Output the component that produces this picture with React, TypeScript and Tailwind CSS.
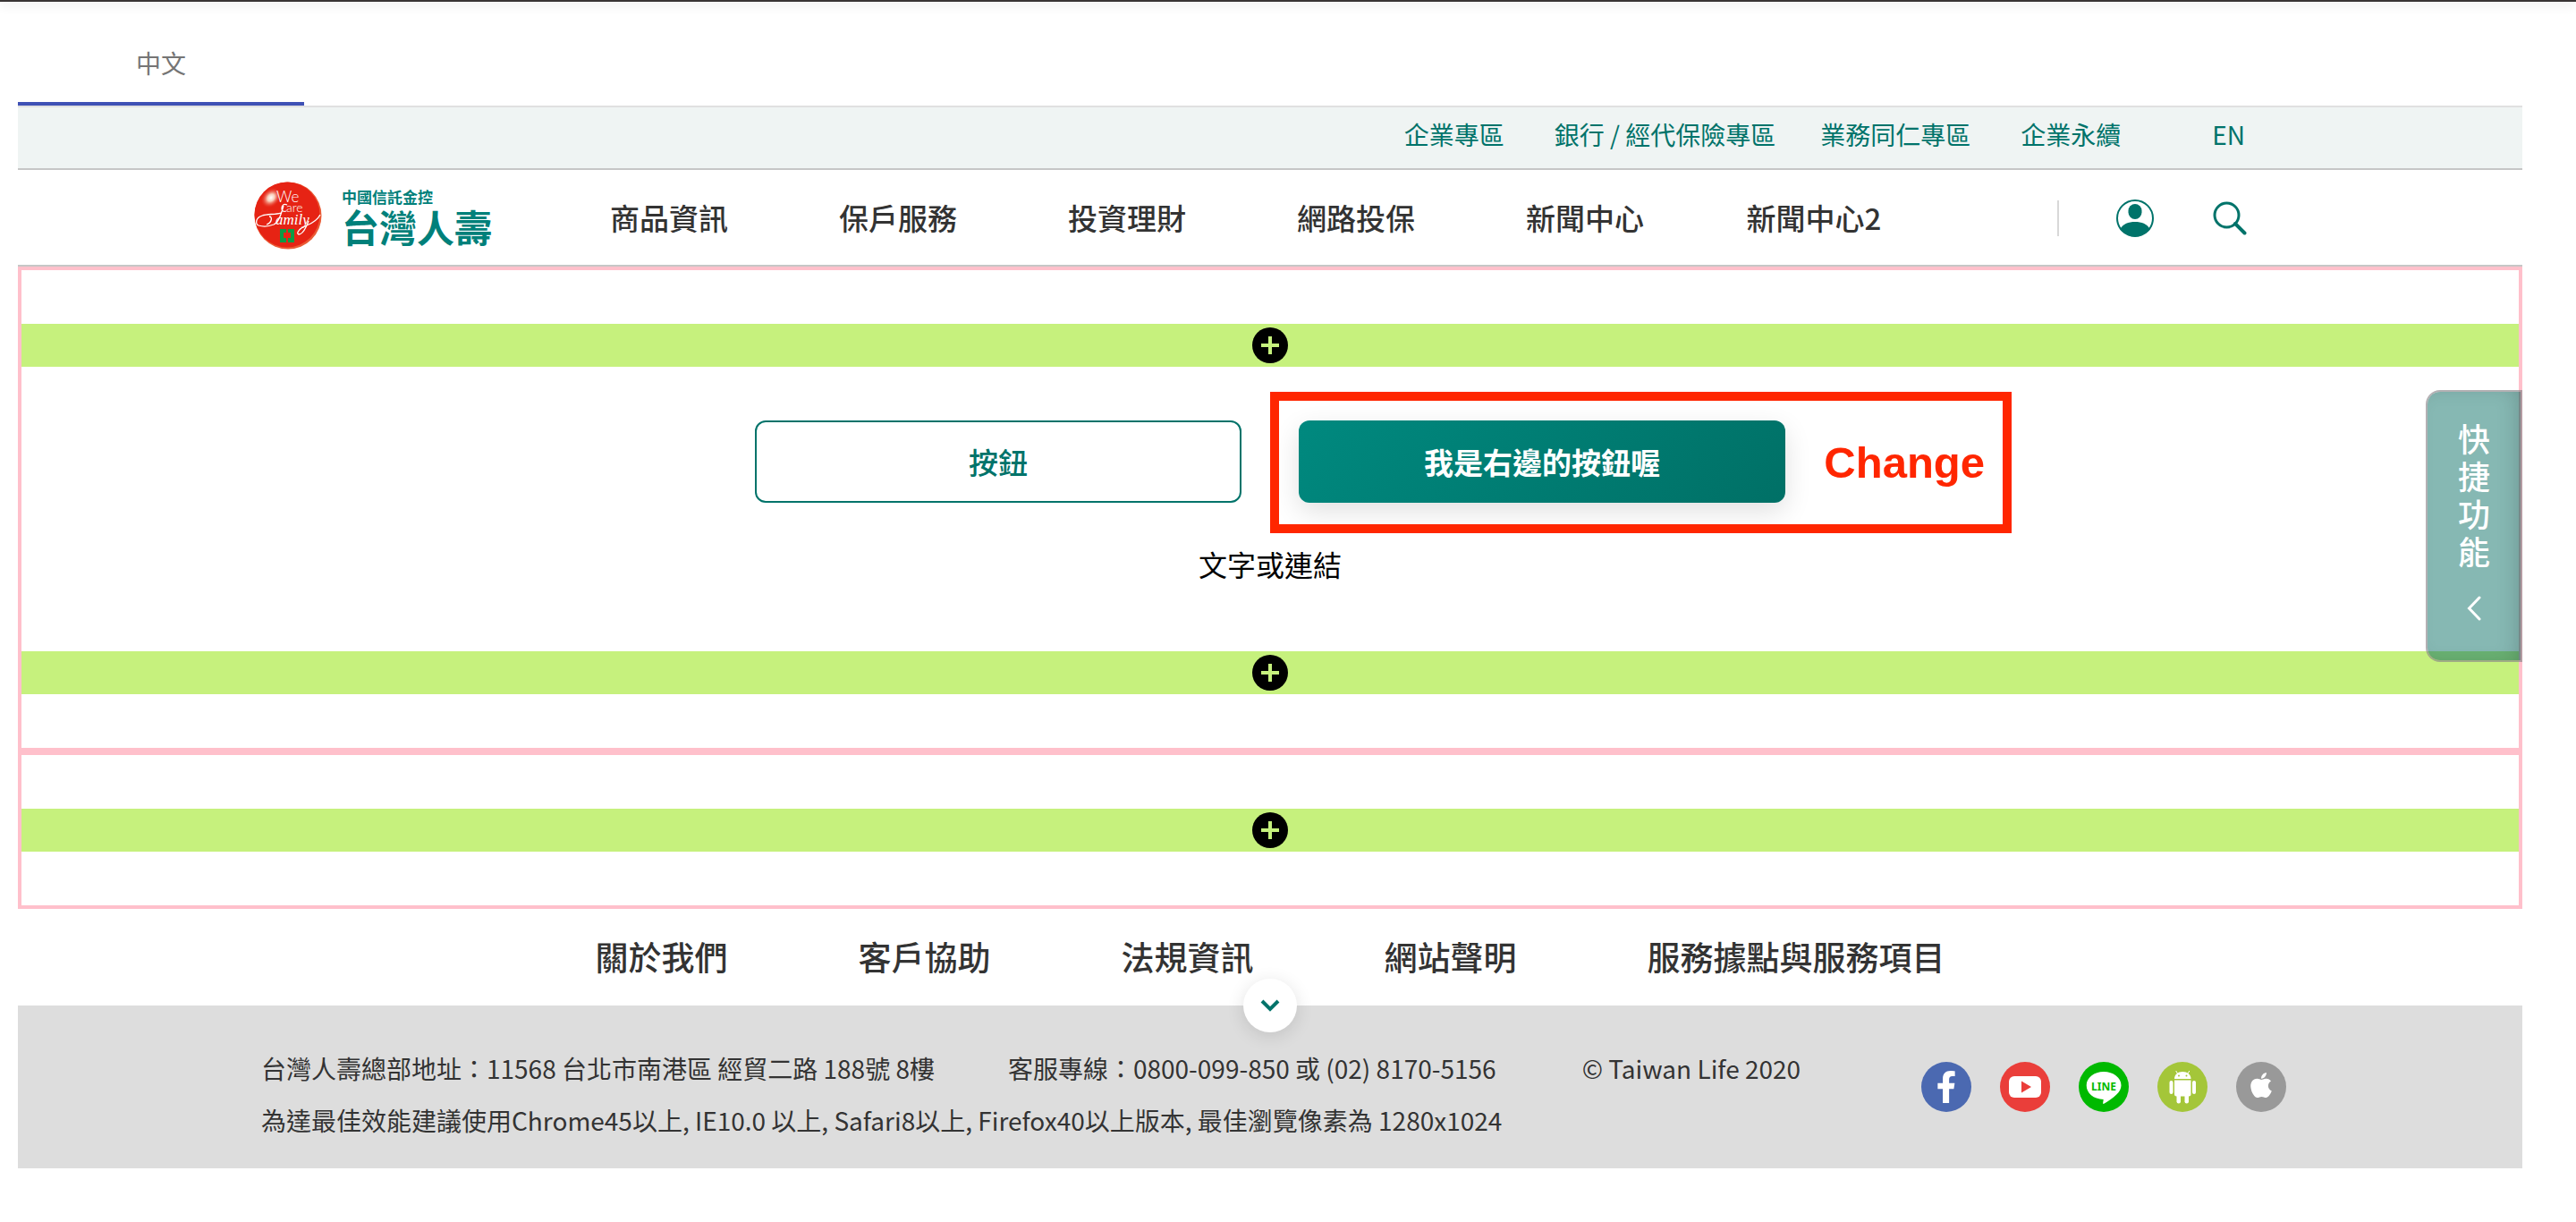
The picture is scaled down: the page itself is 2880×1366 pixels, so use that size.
import React from "react";
import { FaApple, FaFacebookF } from "react-icons/fa";

const topLinks = [
  { label: "企業專區", gap: "" },
  { label: "銀行 / 經代保險專區", gap: "ml-14" },
  { label: "業務同仁專區", gap: "ml-[50px]" },
  { label: "企業永續", gap: "ml-14" },
  { label: "EN", gap: "ml-[102px]" },
];

const navItems = ["商品資訊", "保戶服務", "投資理財", "網路投保", "新聞中心", "新聞中心2"];

const footerLinks = ["關於我們", "客戶協助", "法規資訊", "網站聲明", "服務據點與服務項目"];

function Emblem() {
  return (
    <svg viewBox="0 0 76 76" className="size-[76px] shrink-0" aria-hidden="true">
      <defs>
        <radialGradient id="shine" cx="0.5" cy="0.5" r="0.5">
          <stop offset="0" stopColor="#ffffff" />
          <stop offset="0.35" stopColor="#f9cdb8" />
          <stop offset="1" stopColor="#e62314" stopOpacity="0" />
        </radialGradient>
      </defs>
      <circle cx="38" cy="38" r="37.5" fill="#ea5a35" />
      <circle cx="37" cy="37" r="36.5" fill="#e62314" />
      <ellipse cx="19" cy="18" rx="13" ry="10" fill="url(#shine)" transform="rotate(-45 19 18)" />
      <text x="25" y="23" fontFamily="Lato, sans-serif" fontWeight="300" fontSize="17" fill="#fff">We</text>
      <text x="36" y="34" fontFamily="Lato, sans-serif" fontWeight="300" fontSize="14" fill="#fff">are</text>
      <path d="M37 26c-4-2-6 1-6 4s2 4 5 3M33 27c-3 10-5 18-11 21-5 2-11 3-17 1-4-2-3-9 4-11 6-2 14-1 21-3M17 39c4 0 3 7-3 9" fill="none" stroke="#fff" strokeWidth="1.3" />
      <text x="24" y="48" fontFamily="'Liberation Serif', serif" fontStyle="italic" fontSize="17" fill="#fff">amily</text>
      <path d="M61 44c-3 8-7 15-11 15-4-1 2-8 9-10 7-3 12-6 15-12" fill="none" stroke="#fff" strokeWidth="1.3" />
      <path d="M29 53h7v4h-3v6h3v5h-7zM45 53h-7v4h3v6h-3v5h7z" fill="#0c9a45" />
    </svg>
  );
}

function UserIcon() {
  return (
    <svg viewBox="0 0 42 42" className="size-[42px]" aria-hidden="true">
      <defs>
        <clipPath id="userDisc">
          <circle cx="21" cy="21" r="20.5" />
        </clipPath>
      </defs>
      <circle cx="21" cy="21" r="20" fill="#fff" stroke="#00736a" strokeWidth="2" />
      <rect x="13.5" y="5" width="15" height="17" rx="7.5" fill="#00736a" />
      <path d="M2 44C2 30 10 25 21 25s19 5 19 19z" fill="#00736a" clipPath="url(#userDisc)" />
    </svg>
  );
}

function SearchIcon() {
  return (
    <svg viewBox="0 0 38 38" className="size-[38px]" fill="none" stroke="#00736a" aria-hidden="true">
      <circle cx="15.5" cy="15.5" r="13.5" strokeWidth="3" />
      <path d="M25 25l10.5 10.5" strokeWidth="4" strokeLinecap="round" />
    </svg>
  );
}

function InsertBand() {
  return (
    <div className="flex h-12 items-center justify-center bg-[#c6f17d]">
      <button type="button" aria-label="新增區塊" className="rounded-full">
        <svg viewBox="0 0 40 40" className="size-10" aria-hidden="true">
          <circle cx="20" cy="20" r="20" fill="#000" />
          <path d="M20 10v20M10 20h20" stroke="#c6f17d" strokeWidth="4" />
        </svg>
      </button>
    </div>
  );
}

function YoutubeMark() {
  return (
    <svg viewBox="0 0 56 56" className="size-14" aria-hidden="true">
      <rect x="10" y="16" width="36" height="24" rx="6" fill="#fff" />
      <path d="M24 21.5v13L35 28z" fill="#ea3e3a" />
    </svg>
  );
}

function LineMark() {
  return (
    <svg viewBox="0 0 56 56" className="size-14" aria-hidden="true">
      <path d="M28 11c10.800 0 19.500 6.700 19.500 15.200 0 4-2 7.200-5.200 10.300-4 4-10 8-14 10.300-1.200.5-1.300-.4-1.100-1.300l.5-3.500C16.500 41.500 8.700 35 8.700 26.200 8.700 17.700 17.200 11 28 11z" fill="#fff" />
      <text x="28" y="31.500" textAnchor="middle" fontFamily="'Noto Sans', sans-serif" fontWeight="700" fontSize="12" fill="#00b900">LINE</text>
    </svg>
  );
}

function AndroidMark() {
  return (
    <svg viewBox="0 0 56 56" className="size-14" aria-hidden="true">
      <g fill="#fff">
        <path d="M19 19c0-5 4-8 9.200-8s9.300 3 9.300 8z" />
        <path d="M19 20.500h18.500V36a2.500 2.500 0 0 1-2.500 2.500H21.500A2.500 2.500 0 0 1 19 36z" />
        <rect x="13.500" y="21" width="4" height="15" rx="2" />
        <rect x="39" y="21" width="4" height="15" rx="2" />
        <rect x="21.500" y="34" width="4.500" height="12.500" rx="2.200" />
        <rect x="30.500" y="34" width="4.500" height="12.500" rx="2.200" />
      </g>
      <path d="M22.500 13l-1.800-3M34 13l1.800-3" stroke="#fff" strokeWidth="1" />
      <circle cx="24" cy="15.500" r="1" fill="#a4c639" />
      <circle cx="32.500" cy="15.500" r="1" fill="#a4c639" />
    </svg>
  );
}

const socials = [
  { name: "Facebook", bg: "bg-[#4b69b1]", icon: <FaFacebookF className="size-9 text-white" /> },
  { name: "YouTube", bg: "bg-[#ea3e3a]", icon: <YoutubeMark /> },
  { name: "LINE", bg: "bg-[#00b900]", icon: <LineMark /> },
  { name: "Android", bg: "bg-[#a4c639]", icon: <AndroidMark /> },
  { name: "Apple", bg: "bg-[#999999]", icon: <FaApple className="mb-1 size-8 text-white" /> },
];

export default function App() {
  return (
    <div className="min-h-screen bg-white font-['Noto_Sans_CJK_TC',sans-serif] text-[#333333]">
      <div className="h-0.5 bg-[#383434] shadow-[0_2px_12px_rgba(0,0,0,0.25)]" />
      <div className="relative ml-5 mr-[60px]">
        <div role="tablist" className="flex border-b-2 border-[#e0e0e0]">
          <button
            type="button"
            role="tab"
            aria-selected="true"
            className="h-[116px] w-80 border-b-4 border-[#3f51b5] pt-6 text-[28px] leading-9 text-[#757575]"
          >
            中文
          </button>
        </div>

        <header>
          <div className="border-b-2 border-[#c6c6c6] bg-[#eff4f3]">
            <nav className="mx-auto flex h-[68px] max-w-[2280px] items-center justify-end pb-2 pr-[50px] text-[28px] leading-10 text-[#00736a]">
              {topLinks.map((l) => (
                <a key={l.label} href="#" className={`whitespace-nowrap ${l.gap}`}>
                  {l.label}
                </a>
              ))}
            </nav>
          </div>
          <div className="border-b-2 border-[#c6c6c6]">
            <div className="mx-auto flex h-[106px] max-w-[2280px] items-center pl-1 pr-12">
              <a href="#" className="flex w-[336px] shrink-0 items-center gap-[22px] pb-1">
                <Emblem />
                <span className="flex flex-col font-bold text-[#00807a]">
                  <span className="text-[17px] leading-6">中國信託金控</span>
                  <span className="text-[42px] leading-[42px]">台灣人壽</span>
                </span>
              </a>
              <nav className="flex text-[33px] font-medium leading-10">
                {navItems.map((n) => (
                  <a key={n} href="#" className="w-64 whitespace-nowrap text-center">
                    {n}
                  </a>
                ))}
              </nav>
              <div className="ml-auto flex items-center pt-0.5">
                <span className="h-10 w-0.5 bg-[#d8d8d8]" />
                <button type="button" aria-label="會員登入" className="ml-16">
                  <UserIcon />
                </button>
                <button type="button" aria-label="搜尋" className="ml-[66px]">
                  <SearchIcon />
                </button>
              </div>
            </div>
          </div>
        </header>

        <main>
          <section className="border-4 border-[#ffc0cb] py-[60px]">
            <InsertBand />
            <div className="flex flex-col items-center pb-[74px] pt-[60px]">
              <div className="flex gap-16">
                <button
                  type="button"
                  className="h-[92px] w-[544px] rounded-xl border-2 border-[#00736a] text-[33px] font-medium leading-10 text-[#00736a]"
                >
                  按鈕
                </button>
                <div className="relative">
                  <button
                    type="button"
                    className="h-[92px] w-[544px] rounded-xl bg-linear-[135deg] from-[#00897f] to-[#007066] text-[33px] font-bold leading-10 text-white shadow-[0_10px_30px_rgba(0,0,0,0.12)]"
                  >
                    我是右邊的按鈕喔
                  </button>
                  <div className="pointer-events-none absolute -left-8 -top-8 flex h-[158px] w-[829px] items-center justify-end border-[10px] border-[#ff2600] pr-5">
                    <span className="font-['Liberation_Sans',sans-serif] text-[49px] font-bold leading-none text-[#ff2600]">
                      Change
                    </span>
                  </div>
                </div>
              </div>
              <p className="mt-11 text-[32px] leading-12 text-black">文字或連結</p>
            </div>
            <InsertBand />
          </section>
          <section className="border-4 border-[#ffc0cb] py-[60px]">
            <InsertBand />
          </section>
        </main>

        <footer>
          <nav className="flex h-[108px] items-center justify-center gap-[146px] pb-0.5 text-[37px] font-medium leading-12">
            {footerLinks.map((f) => (
              <a key={f} href="#" className="whitespace-nowrap">
                {f}
              </a>
            ))}
          </nav>
          <div className="relative bg-[#dddddd]">
            <button
              type="button"
              aria-label="展開頁尾選單"
              className="absolute -top-[30px] left-1/2 flex size-[60px] -translate-x-1/2 items-center justify-center rounded-full bg-white shadow-[0_4px_20px_rgba(0,0,0,0.12)]"
            >
              <svg viewBox="0 0 22 14" className="h-3.5 w-[22px]" fill="none" aria-hidden="true">
                <path d="M2 2l9 9 9-9" stroke="#00736a" strokeWidth="4" />
              </svg>
            </button>
            <div className="mx-auto flex h-[182px] max-w-[2280px] items-center justify-between pl-3 pr-1">
              <div className="whitespace-nowrap pt-4 text-[28px] leading-[58px]">
                <p className="flex">
                  <span>台灣人壽總部地址：11568 台北市南港區 經貿二路 188號 8樓</span>
                  <span className="ml-[82px]">客服專線：0800-099-850 或 (02) 8170-5156</span>
                  <span className="ml-24">© Taiwan Life 2020</span>
                </p>
                <p>為達最佳效能建議使用Chrome45以上, IE10.0 以上, Safari8以上, Firefox40以上版本, 最佳瀏覽像素為 1280x1024</p>
              </div>
              <div className="flex gap-8">
                {socials.map((s) => (
                  <a
                    key={s.name}
                    href="#"
                    aria-label={s.name}
                    className={`flex size-14 items-center justify-center rounded-full ${s.bg}`}
                  >
                    {s.icon}
                  </a>
                ))}
              </div>
            </div>
          </div>
        </footer>

        <button
          type="button"
          className="absolute right-0 top-[434px] flex h-[304px] w-[108px] flex-col items-center rounded-l-2xl border-2 border-[#8a868a]/65 bg-[#0d7167]/50 bg-clip-padding pt-[30px] text-4xl font-medium leading-[42px] text-white shadow-[inset_-10px_0_24px_-8px_rgba(0,0,0,0.2)]"
        >
          <span className="w-9">快捷功能</span>
          <svg viewBox="0 0 16 28" className="mt-[30px] h-7 w-4" fill="none" aria-hidden="true">
            <path d="M14 2L2.500 14 14 26" stroke="#fff" strokeWidth="3" strokeLinecap="round" />
          </svg>
        </button>
      </div>
    </div>
  );
}
